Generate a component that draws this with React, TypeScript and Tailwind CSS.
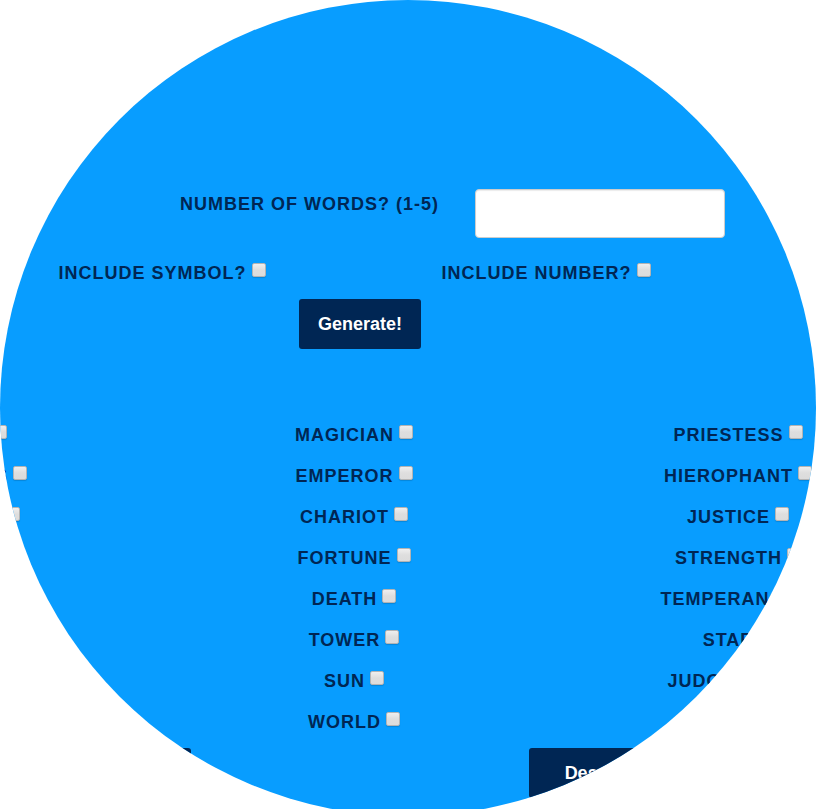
import React from "react";

const rows: string[][] = [
  ["Fool", "Magician", "Priestess"],
  ["Empress", "Emperor", "Hierophant"],
  ["Lovers", "Chariot", "Justice"],
  ["Hermit", "Fortune", "Strength"],
  ["Hanged", "Death", "Temperance"],
  ["Devil", "Tower", "Star"],
  ["Moon", "Sun", "Judgement"],
  ["", "World", ""],
];

function CheckField({ name }: { name: string }) {
  return (
    <label className="flex h-[41px] items-center justify-center gap-[5px] whitespace-nowrap tracking-[1px] uppercase">
      <span>{name}</span>
      <input
        type="checkbox"
        className="mb-1.5 size-3.5 shrink-0 appearance-none rounded-[2px] border border-[#b4b4b4] bg-linear-to-b from-[#efefef] via-[#dedede] to-[#dcdcdc] shadow-[0_1px_1px_rgba(0,0,0,0.15)] checked:bg-[#002654]"
      />
    </label>
  );
}

function Button({ wide, children }: { wide?: boolean; children: React.ReactNode }) {
  return (
    <button
      type="button"
      className={`ml-3 h-[50px] rounded-[3px] bg-[#002654] text-white ${wide ? "w-[238px]" : "px-[19px]"}`}
    >
      {children}
    </button>
  );
}

export default function App() {
  return (
    <div className="h-screen overflow-hidden bg-white">
      <main className="flex aspect-square w-full justify-center overflow-hidden rounded-full bg-[#089dff] pt-[189px] pr-[108px] font-['Liberation_Sans',Arial,sans-serif] text-[18px] leading-[30px] font-bold text-[#002654]">
        <form className="w-[1152px] shrink-0">
          <div className="flex justify-center gap-9 pl-[197px]">
            <label htmlFor="words" className="whitespace-nowrap tracking-[1px] uppercase">
              Number of words? (1-5)
            </label>
            <input
              id="words"
              type="text"
              className="h-[49px] w-[250px] rounded-[4px] border border-[#cccccc] bg-white px-3 shadow-[inset_0_1px_1px_rgba(0,0,0,0.08)]"
            />
          </div>
          <div className="mx-auto mt-[14px] grid w-[768px] grid-cols-2">
            <CheckField name="Include symbol?" />
            <CheckField name="Include number?" />
          </div>
          <div className="mt-1.5 flex justify-center">
            <Button>Generate!</Button>
          </div>
          <div className="mt-[65px] grid grid-cols-3">
            {rows.flat().map((name, i) =>
              name ? <CheckField key={i} name={name} /> : <span key={i} />
            )}
          </div>
          <div className="mt-1.5 grid grid-cols-2 justify-items-center">
            <Button wide>Select All Arcana</Button>
            <Button wide>Deselect All Arcana</Button>
          </div>
        </form>
      </main>
    </div>
  );
}
